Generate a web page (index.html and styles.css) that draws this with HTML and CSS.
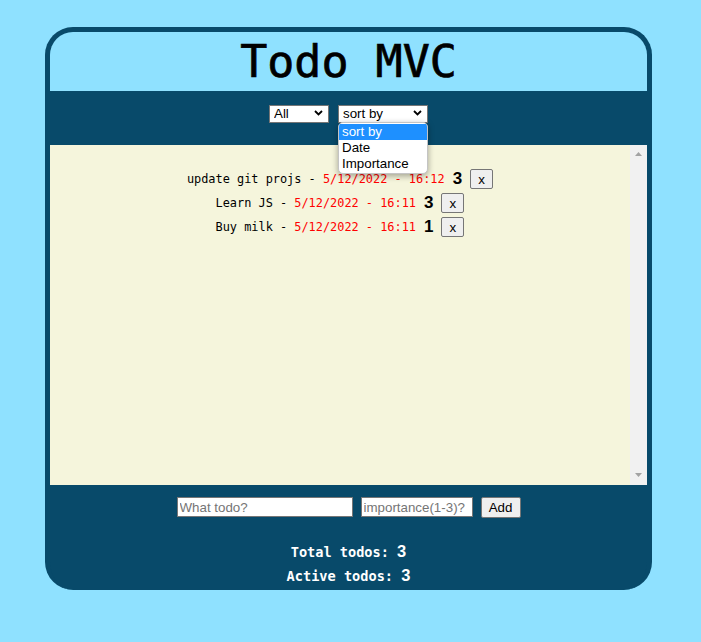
FILE: index.html
```html
<!DOCTYPE html>
<html lang="en">
<head>
<meta charset="utf-8">
<title>Todo MVC</title>
<link rel="stylesheet" href="styles.css">
</head>
<body>
<div class="app">
  <header class="head"><h1 class="title">Todo MVC</h1></header>
  <div class="controls">
    <div class="sel sel-filter">
      <select class="select"><option>All</option><option>Active</option><option>Completed</option></select>
      <svg class="chev" width="9" height="6" viewBox="0 0 9 6"><path d="M1 1 L4.5 4.5 L8 1" fill="none" stroke="#000" stroke-width="1.8"/></svg>
    </div>
    <div class="sel sel-sort">
      <select class="select"><option>sort by</option><option>Date</option><option>Importance</option></select>
      <svg class="chev" width="9" height="6" viewBox="0 0 9 6"><path d="M1 1 L4.5 4.5 L8 1" fill="none" stroke="#000" stroke-width="1.8"/></svg>
      <div class="menu">
        <div class="opt opt-active">sort by</div>
        <div class="opt">Date</div>
        <div class="opt">Importance</div>
      </div>
    </div>
  </div>
  <div class="board">
    <ul class="list">
      <li class="item"><span class="desc">update git projs - <span class="date">5/12/2022 - 16:12</span></span><span class="imp">3</span><button class="del">x</button></li>
      <li class="item"><span class="desc">Learn JS - <span class="date">5/12/2022 - 16:11</span></span><span class="imp">3</span><button class="del">x</button></li>
      <li class="item"><span class="desc">Buy milk - <span class="date">5/12/2022 - 16:11</span></span><span class="imp">1</span><button class="del">x</button></li>
    </ul>
    <div class="scroll">
      <svg width="7" height="4" viewBox="0 0 7 4"><path d="M0 4 L3.5 0 L7 4 Z" fill="#a3a3a3"/></svg>
      <svg width="7" height="4" viewBox="0 0 7 4"><path d="M0 0 L7 0 L3.5 4 Z" fill="#a3a3a3"/></svg>
    </div>
  </div>
  <div class="foot">
    <form class="add">
      <input class="field field-what" type="text" placeholder="What todo?">
      <input class="field field-imp" type="text" placeholder="importance(1-3)?">
      <button class="add-btn" type="button">Add</button>
    </form>
    <div class="stats">
      <div class="stat">Total todos: <span class="num">3</span></div>
      <div class="stat">Active todos: <span class="num">3</span></div>
    </div>
  </div>
</div>
</body>
</html>
```
FILE: styles.css
```css
* { box-sizing: border-box; }
body {
  margin: 0;
  background: #8fe1ff;
  font-family: "Liberation Sans", Arial, sans-serif;
}
.app {
  width: 607px;
  margin: 27px 0 0 45px;
  border: 5px solid #084a6a;
  border-bottom: 0;
  border-radius: 28px;
  background: #084a6a;
  overflow: hidden;
}
.head {
  height: 59px;
  background: #8fe1ff;
  text-align: center;
}
.title {
  margin: 0;
  font-family: "DejaVu Sans Mono", monospace;
  font-weight: normal;
  font-size: 45px;
  line-height: 60px;
  color: #000;
  -webkit-text-stroke: 0.7px #000;
}
.controls {
  height: 54px;
  padding-top: 13px;
  display: flex;
  justify-content: center;
  gap: 9px;
}
.sel {
  position: relative;
  height: 18px;
}
.sel-filter { width: 60px; }
.sel-sort { width: 90px; }
.select {
  appearance: none;
  -webkit-appearance: none;
  width: 100%;
  height: 18px;
  margin: 0;
  padding: 0 0 0 4px;
  border: 1px solid #767676;
  border-radius: 0;
  background: #fff;
  font-family: "Liberation Sans", Arial, sans-serif;
  font-size: 13.33px;
  line-height: 16px;
  color: #000;
}
.chev {
  position: absolute;
  right: 6px;
  top: 6px;
  pointer-events: none;
}
.menu {
  position: absolute;
  left: 0;
  top: 18px;
  width: 90px;
  padding: 1px 0;
  background: #fff;
  border: 1px solid #c4c4c4;
  border-radius: 5px;
  box-shadow: 0 2px 6px rgba(0,0,0,0.35);
  font-size: 13.33px;
  overflow: hidden;
  z-index: 5;
}
.opt {
  height: 16px;
  line-height: 16px;
  padding-left: 3px;
  color: #000;
}
.opt-active {
  background: #1e90ff;
  color: #fff;
}
.board {
  height: 340px;
  display: flex;
  background: #f5f5dc;
}
.list {
  flex: 1;
  margin: 0;
  padding: 22px 0 0;
  list-style: none;
}
.item {
  height: 24px;
  display: flex;
  justify-content: center;
  align-items: center;
  gap: 8px;
}
.desc {
  font-family: "DejaVu Sans Mono", monospace;
  font-size: 11.9px;
  color: #000;
}
.date { color: #ff0000; }
.imp {
  font-family: "Liberation Sans", Arial, sans-serif;
  font-weight: bold;
  font-size: 17px;
  line-height: 20px;
  color: #000;
}
.del {
  width: 23px;
  height: 20px;
  margin: 0;
  padding: 0;
  border: 1px solid #767676;
  border-radius: 2px;
  background: #efefef;
  font-family: "Liberation Sans", Arial, sans-serif;
  font-size: 13.33px;
  color: #000;
}
.scroll {
  width: 17px;
  background: #f1f1f1;
  display: flex;
  flex-direction: column;
  justify-content: space-between;
  align-items: center;
  padding: 7px 0 8px;
}
.foot {
  height: 105px;
  padding-top: 12px;
}
.add {
  display: flex;
  justify-content: center;
  gap: 8px;
  margin: 0;
}
.field {
  height: 20px;
  margin: 0;
  padding: 1px 2px;
  border: 1px solid #767676;
  background: #fff;
  font-family: "Liberation Sans", Arial, sans-serif;
  font-size: 13.33px;
  color: #000;
}
.field::placeholder { color: #757575; }
.field-what { width: 176px; }
.field-imp { width: 112px; }
.add-btn {
  width: 40px;
  height: 21px;
  margin: 0;
  padding: 0;
  border: 1px solid #767676;
  border-radius: 2px;
  background: #efefef;
  font-family: "Liberation Sans", Arial, sans-serif;
  font-size: 13.33px;
  color: #000;
}
.stats {
  margin-top: 21px;
  text-align: center;
  color: #fff;
}
.stat {
  height: 24px;
  line-height: 24px;
  font-family: "DejaVu Sans Mono", monospace;
  font-weight: bold;
  font-size: 13.6px;
}
.num {
  font-family: "Liberation Sans", Arial, sans-serif;
  font-size: 16.5px;
}
```
